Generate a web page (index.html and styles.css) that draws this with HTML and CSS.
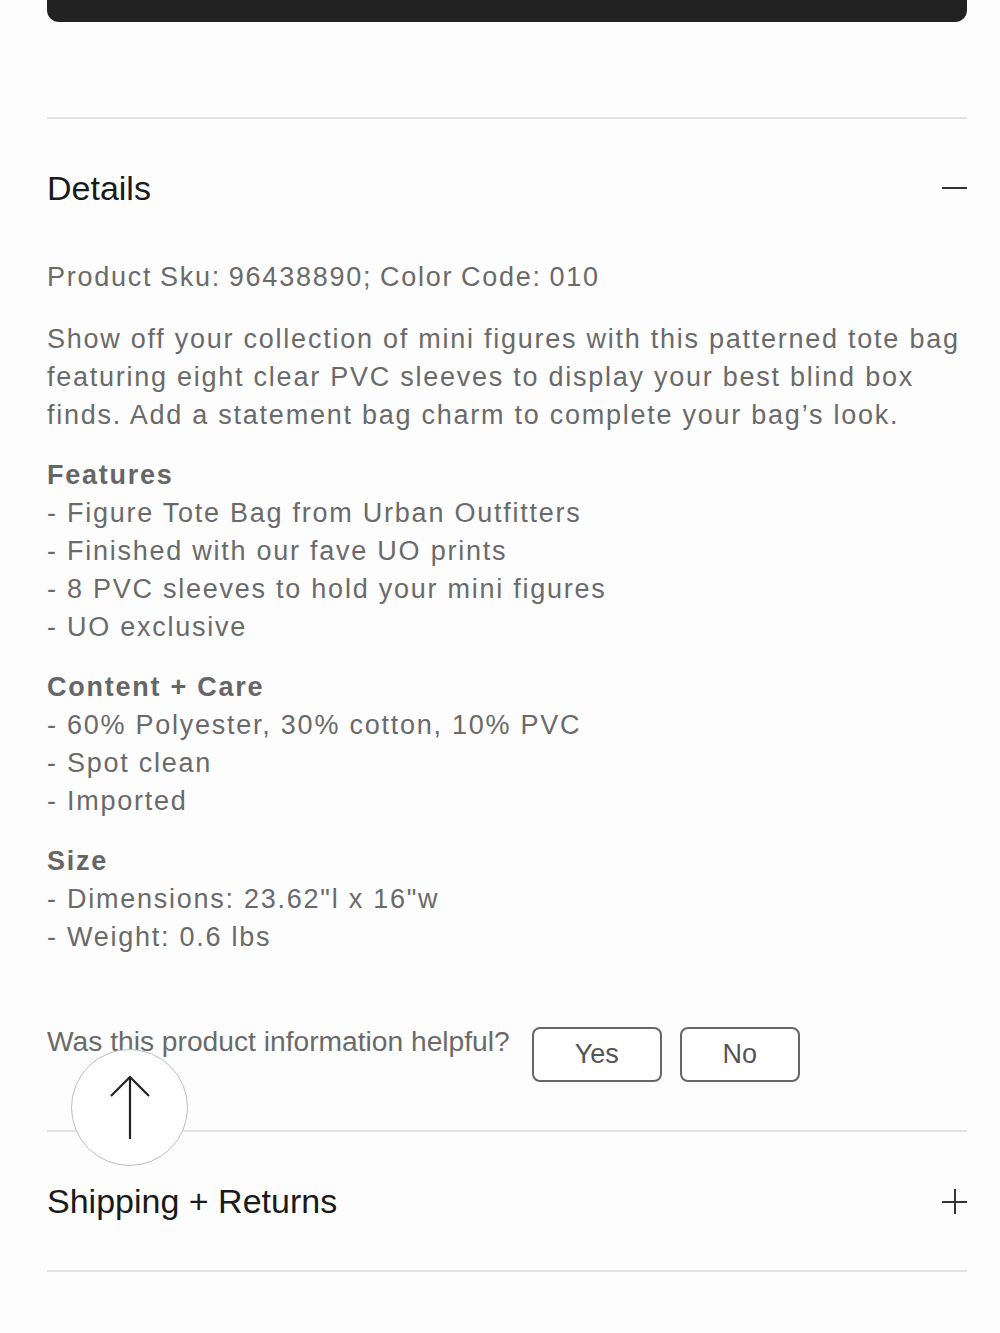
FILE: index.html
```html
<!DOCTYPE html>
<html lang="en">
<head>
<meta charset="utf-8">
<title>Details</title>
<link rel="stylesheet" href="styles.css">
</head>
<body>
<div class="page">
  <div class="top-bar"></div>

  <section class="accordion open">
    <div class="acc-head">
      <h2 class="acc-title">Details</h2>
      <span class="icon-minus"></span>
    </div>
    <div class="acc-body">
      <p class="sku">Product Sku: 96438890; Color Code: 010</p>
      <p class="desc">Show off your collection of mini figures with this patterned tote bag featuring eight clear PVC sleeves to display your best blind box finds. Add a statement bag charm to complete your bag’s look.</p>
      <div class="block">
        <div class="block-title">Features</div>
        <div>- Figure Tote Bag from Urban Outfitters</div>
        <div>- Finished with our fave UO prints</div>
        <div>- 8 PVC sleeves to hold your mini figures</div>
        <div>- UO exclusive</div>
      </div>
      <div class="block">
        <div class="block-title">Content + Care</div>
        <div>- 60% Polyester, 30% cotton, 10% PVC</div>
        <div>- Spot clean</div>
        <div>- Imported</div>
      </div>
      <div class="block">
        <div class="block-title">Size</div>
        <div>- Dimensions: 23.62"l x 16"w</div>
        <div>- Weight: 0.6 lbs</div>
      </div>
      <div class="helpful">
        <span class="helpful-q">Was this product information helpful?</span>
        <button class="btn btn-yes">Yes</button>
        <button class="btn btn-no">No</button>
      </div>
    </div>
  </section>

  <section class="accordion">
    <div class="acc-head">
      <h2 class="acc-title">Shipping + Returns</h2>
      <span class="icon-plus"></span>
    </div>
  </section>
</div>

<button class="to-top" aria-label="Back to top">
  <svg width="44" height="66" viewBox="0 0 44 66" fill="none" stroke="#222" stroke-width="2.2">
    <line x1="22" y1="2" x2="22" y2="64"/>
    <polyline points="3,21 22,2 41,21"/>
  </svg>
</button>
</body>
</html>
```

FILE: styles.css
```css
html, body {
  margin: 0;
  padding: 0;
  background: #fdfdfd;
}
body {
  font-family: "Liberation Sans", Arial, Helvetica, sans-serif;
  color: #6a6a6a;
  position: relative;
  min-height: 1333px;
}
.page {
  margin-left: 47px;
  width: 920px;
}
.top-bar {
  height: 22px;
  background: #222;
  border-radius: 0 0 12px 12px;
}
.accordion {
  border-top: 2px solid #e2e2e2;
}
.accordion:first-of-type {
  margin-top: 95px;
}
.accordion:last-of-type {
  border-bottom: 2px solid #e2e2e2;
}
.acc-head {
  display: flex;
  align-items: center;
  justify-content: space-between;
  padding: 50px 0 50px;
  height: 38px;
}
.accordion.open .acc-head {
  padding-bottom: 0;
}
.acc-title {
  margin: 0;
  font-size: 34px;
  font-weight: normal;
  line-height: 38px;
  color: #1a1a1a;
}
.icon-minus {
  width: 25px;
  height: 2px;
  background: #333;
}
.icon-plus {
  width: 25px;
  height: 25px;
  position: relative;
}
.icon-plus::before,
.icon-plus::after {
  content: "";
  position: absolute;
  background: #333;
}
.icon-plus::before {
  left: 0; right: 0; top: 12px; height: 2px;
}
.icon-plus::after {
  top: 0; bottom: 0; left: 12px; width: 2px;
}
.acc-body {
  padding-top: 51px;
  padding-bottom: 48px;
  font-size: 27px;
  letter-spacing: 1.75px;
  line-height: 38px;
}
.acc-body p {
  margin: 0;
}
.sku {
  word-spacing: -1.5px;
}
.desc {
  margin-top: 24px !important;
}
.block {
  margin-top: 22px;
}
.block-title {
  font-weight: bold;
  color: #666;
}
.helpful {
  display: flex;
  align-items: flex-start;
  margin-top: 71px;
}
.helpful-q {
  font-size: 28.2px;
  letter-spacing: 0;
  line-height: 28px;
  color: #6a6a6a;
  margin-right: 22px;
}
.btn {
  font-family: "Liberation Sans", Arial, Helvetica, sans-serif;
  font-size: 27px;
  letter-spacing: 0;
  color: #555;
  background: #fff;
  border: 2px solid #666;
  border-radius: 8px;
  height: 55px;
  padding: 0;
}
.btn-yes {
  width: 130px;
  margin-right: 18px;
}
.btn-no {
  width: 120px;
}
.to-top {
  position: absolute;
  left: 71px;
  top: 1049px;
  width: 117px;
  height: 117px;
  border-radius: 50%;
  border: 1px solid #bdbdbd;
  background: #fff;
  padding: 0;
  display: flex;
  align-items: center;
  justify-content: center;
}
.to-top svg {
  display: block;
}
```
